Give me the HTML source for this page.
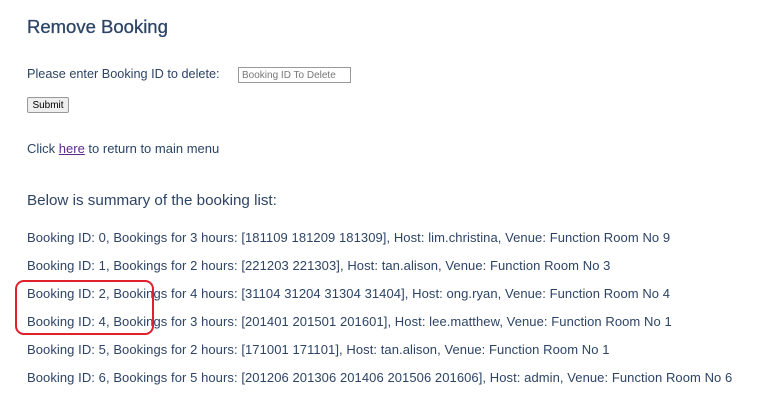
<!DOCTYPE html>
<html><head><style>
body{margin:0;background:#fff;width:773px;height:401px;overflow:hidden;font-family:"Liberation Sans",sans-serif;color:#2d4466;position:relative}
.a{position:absolute;left:27px;white-space:nowrap}
h1{position:absolute;left:27px;top:16px;margin:0;font-size:18.5px;font-weight:normal;color:#2d4466;-webkit-text-stroke:0.3px #2d4466}
.r{font-size:13px;letter-spacing:0.07px}
input{position:absolute;left:238px;top:67px;border:1px solid #999;font:10px "Liberation Sans",sans-serif;padding:0 3px;color:#777;box-sizing:border-box;width:113px;height:16px}
button{position:absolute;left:27px;top:97px;width:42px;height:16px;font:10px "Liberation Sans",sans-serif;border:1px solid #999;background:#eee;border-radius:2px;padding:0}
a{color:#5b2a86}
.box{position:absolute;left:15px;top:280px;width:135px;height:51px;border:2px solid #e0202a;border-radius:9px}
</style></head><body>
<h1>Remove Booking</h1>
<div class="a" style="top:67px;font-size:12.7px">Please enter Booking ID to delete:</div>
<input value="Booking ID To Delete">
<button>Submit</button>
<div class="a" style="top:141px;font-size:13px">Click <a href="#">here</a> to return to main menu</div>
<div class="a" style="top:192px;font-size:15.2px">Below is summary of the booking list:</div>
<div class="a r" style="top:230px">Booking ID: 0, Bookings for 3 hours: [181109 181209 181309], Host: lim.christina, Venue: Function Room No 9</div>
<div class="a r" style="top:258px">Booking ID: 1, Bookings for 2 hours: [221203 221303], Host: tan.alison, Venue: Function Room No 3</div>
<div class="a r" style="top:286px">Booking ID: 2, Bookings for 4 hours: [31104 31204 31304 31404], Host: ong.ryan, Venue: Function Room No 4</div>
<div class="a r" style="top:314px">Booking ID: 4, Bookings for 3 hours: [201401 201501 201601], Host: lee.matthew, Venue: Function Room No 1</div>
<div class="a r" style="top:342px">Booking ID: 5, Bookings for 2 hours: [171001 171101], Host: tan.alison, Venue: Function Room No 1</div>
<div class="a r" style="top:370px">Booking ID: 6, Bookings for 5 hours: [201206 201306 201406 201506 201606], Host: admin, Venue: Function Room No 6</div>
<div class="box"></div>
</body></html>
